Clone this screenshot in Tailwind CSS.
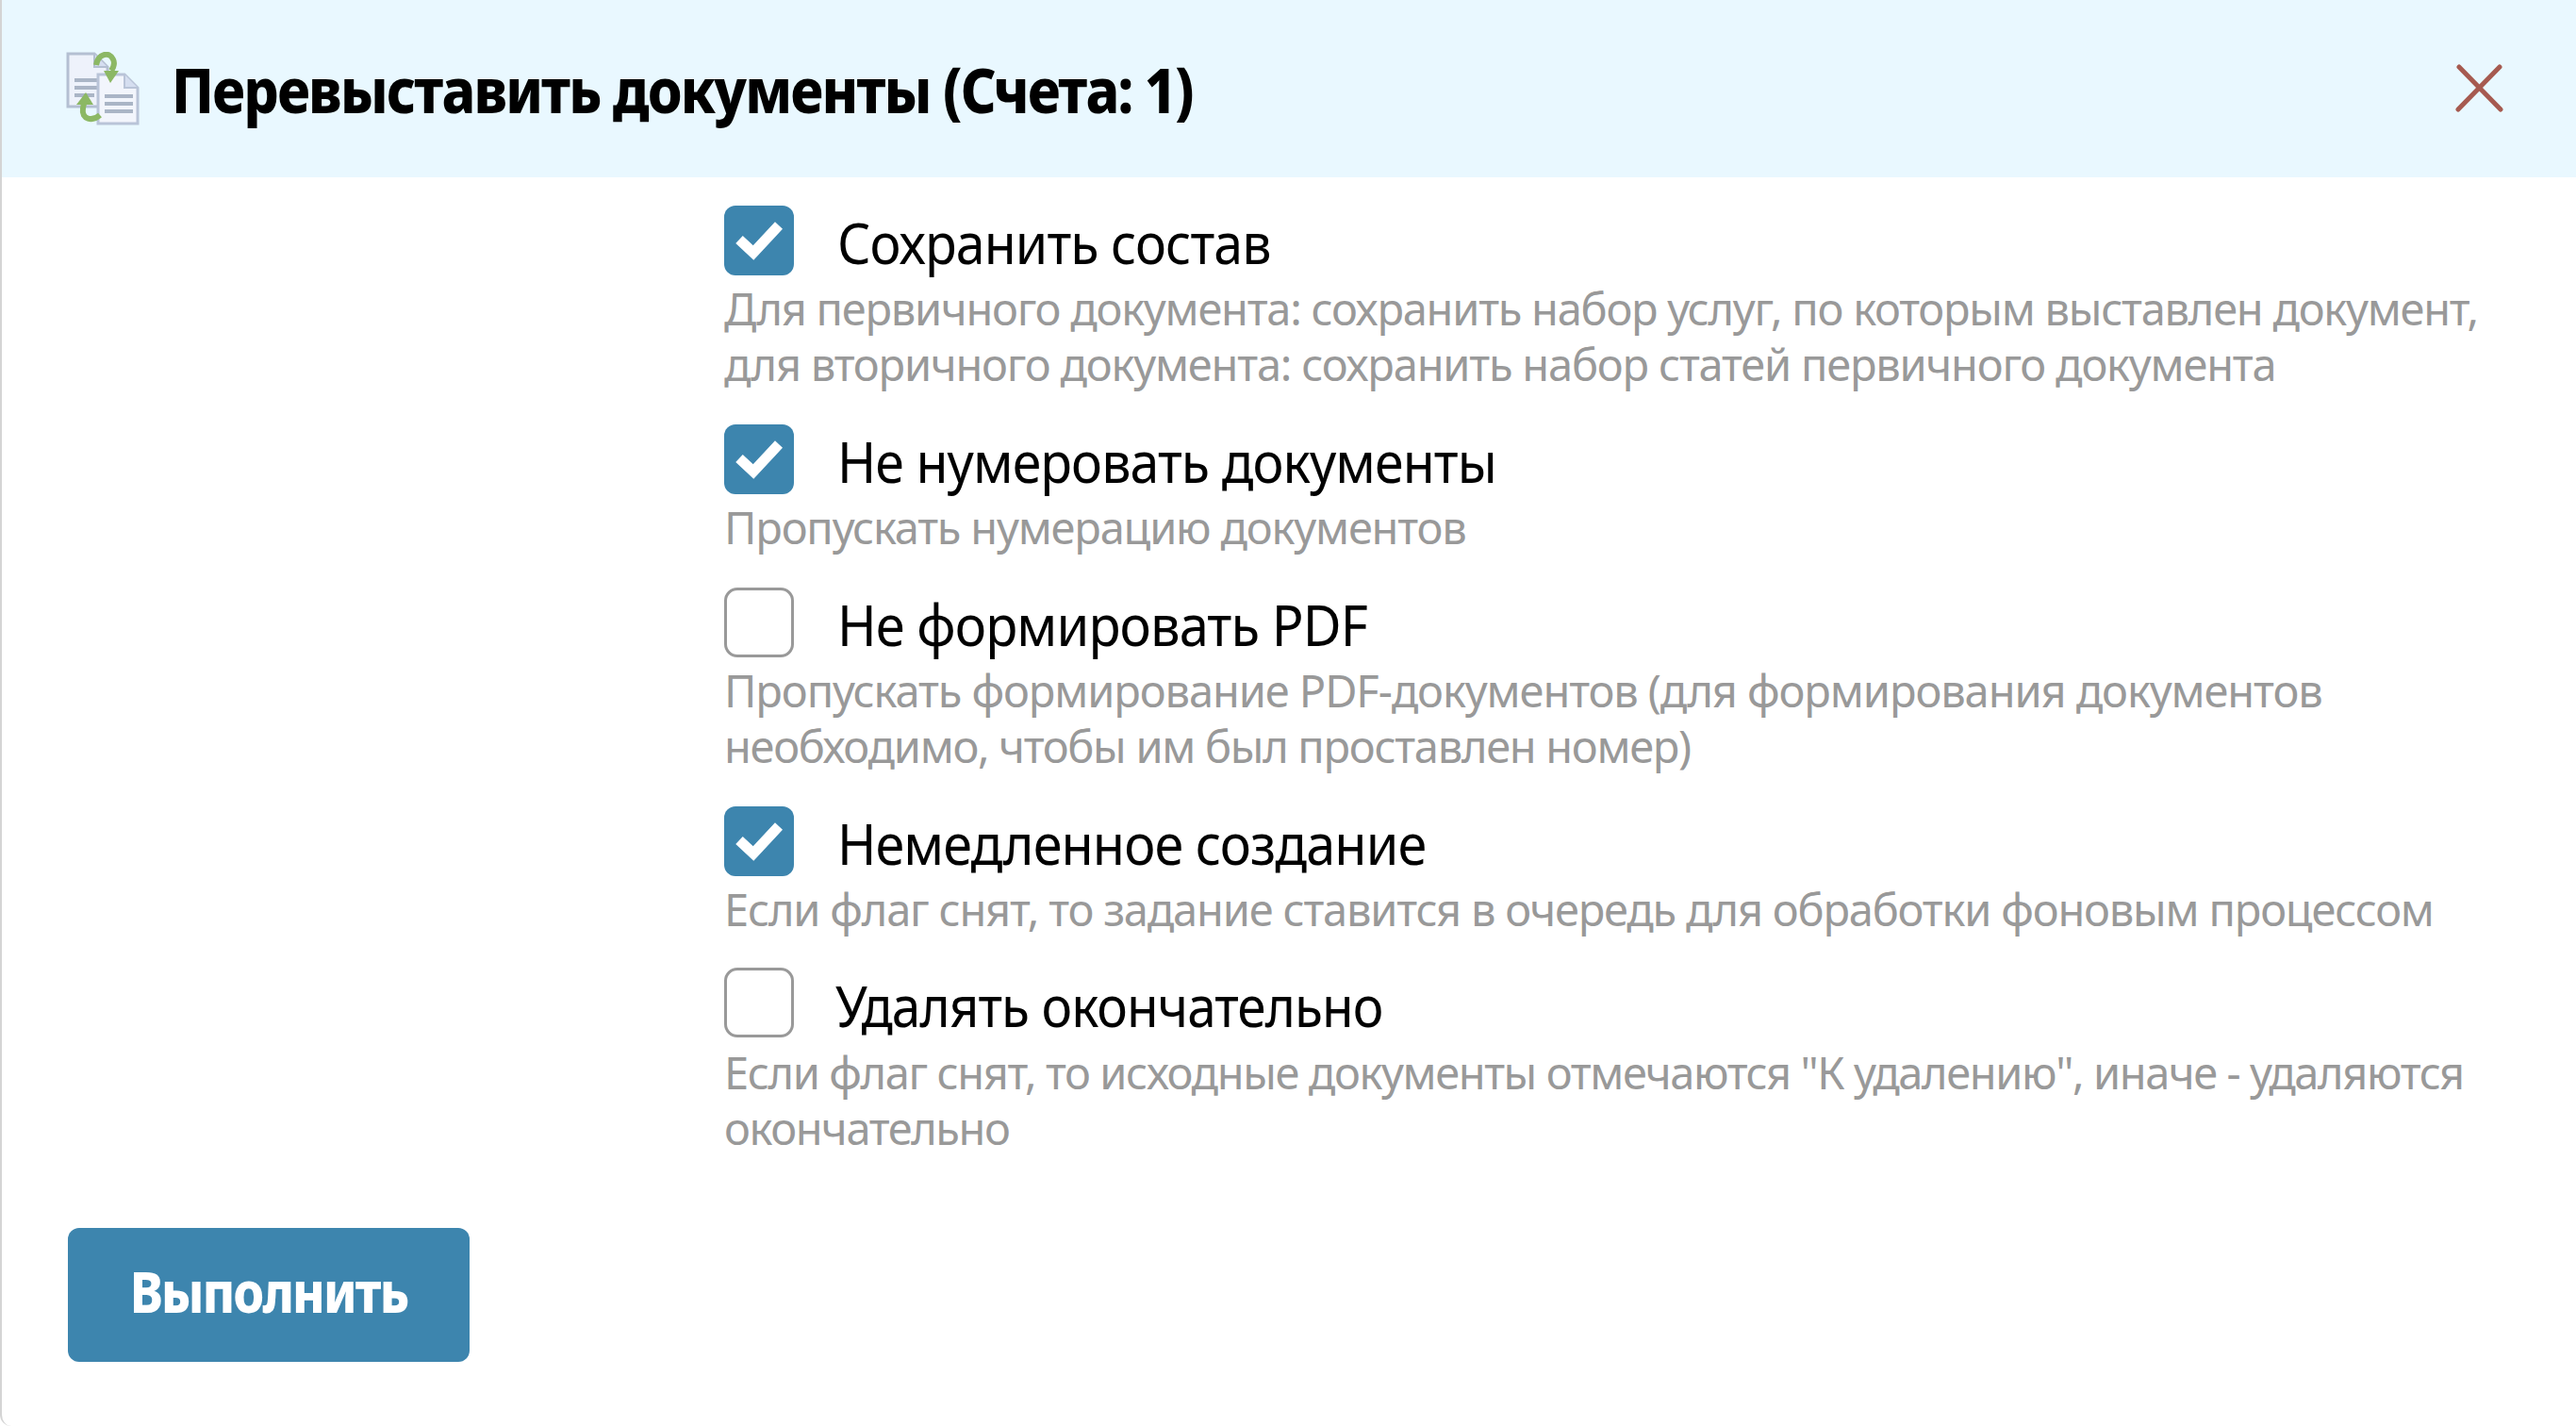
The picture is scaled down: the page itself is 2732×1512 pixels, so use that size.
<!DOCTYPE html>
<html lang="ru">
<head>
<meta charset="utf-8">
<script src="https://cdn.jsdelivr.net/npm/@tailwindcss/browser@4"></script>
<title>Перевыставить документы</title>
</head>
<body class="bg-white font-['Noto_Sans','Open_Sans',sans-serif]">
<div class="w-[2732px] h-[1512px] flex flex-col border-l-2 border-[#d4d4d4] overflow-hidden rounded-bl-xl">
  <header class="h-[188px] shrink-0 bg-[#e9f8ff] flex items-center pl-[68px] pr-[76px]">
    <svg class="w-[78px] h-[78px] shrink-0" viewBox="0 0 78 78" fill="none">
      <path d="M2 2H30L44 16V58H2Z" fill="#eef2fb" stroke="#b4bfd2" stroke-width="3"/>
      <path d="M30 2V16H44" fill="#d5def0" stroke="#b4bfd2" stroke-width="2"/>
      <path d="M9 30H36M9 38H36M9 46H30" stroke="#aab5c6" stroke-width="4"/>
      <path d="M34 24H62L76 38V76H34Z" fill="#f2f5fc" stroke="#b9c4d8" stroke-width="3"/>
      <path d="M62 24V38H76" fill="#d5def0" stroke="#b9c4d8" stroke-width="2"/>
      <path d="M41 47H71M41 55H71M41 63H71" stroke="#aab5c6" stroke-width="4"/>
      <path d="M32 14C34 2 46 -1 50 8C52 12 50 17 48 20" stroke="#8cb864" stroke-width="6"/>
      <path d="M40 20H56L47 33Z" fill="#8cb864"/>
      <path d="M36 67C28 74 16 72 18 60C18 57 19 55 20 53" stroke="#8cb864" stroke-width="6"/>
      <path d="M11 56L21 43L29 56Z" fill="#8cb864"/>
    </svg>
    <h1 class="ml-[34px] text-[66px] leading-none font-extrabold text-black tracking-[-2.1px] whitespace-nowrap origin-left scale-x-[0.894]">Перевыставить документы (Счета: 1)</h1>
    <button class="ml-auto w-[52px] h-[52px] shrink-0">
      <svg viewBox="0 0 52 52" class="w-full h-full" fill="none" stroke="#a65a50" stroke-width="5" stroke-linecap="round"><path d="M4 3L48 48M47 3L3 48"/></svg>
    </button>
  </header>
  <main class="flex-1 flex flex-col pt-[30px]">
    <div class="pl-[766px] flex flex-col h-[1084px] text-[#999999] text-[47px] leading-[59px] tracking-[-1.2px]">
      <section class="pb-[32px]">
        <label class="flex items-center gap-[46px] text-black text-[60px] h-[74px] tracking-[-1px]">
          <span class="w-[74px] h-[74px] shrink-0 rounded-[12px] bg-[#3d85ae] flex items-center justify-center">
            <svg viewBox="0 0 50 42" class="w-[50px] h-[42px]" fill="none" stroke="#fff" stroke-width="11"><path d="M4 20L19 34L46 5"/></svg>
          </span><span class="pt-[4px] whitespace-nowrap origin-left scale-x-[0.925]">Сохранить состав</span></label>
        <p class="mt-[6px] mb-[2px] whitespace-nowrap tracking-[-1.25px]">Для первичного документа: сохранить набор услуг, по которым выставлен документ,<br><span class="tracking-[-1.2px]">для вторичного документа: сохранить набор статей первичного документа</span></p>
      </section>
      <section class="pb-[32px]">
        <label class="flex items-center gap-[46px] text-black text-[60px] h-[74px] tracking-[-1px]">
          <span class="w-[74px] h-[74px] shrink-0 rounded-[12px] bg-[#3d85ae] flex items-center justify-center">
            <svg viewBox="0 0 50 42" class="w-[50px] h-[42px]" fill="none" stroke="#fff" stroke-width="11"><path d="M4 20L19 34L46 5"/></svg>
          </span><span class="pt-[4px] whitespace-nowrap origin-left scale-x-[0.925]">Не нумеровать документы</span></label>
        <p class="mt-[6px] mb-[2px] whitespace-nowrap">Пропускать нумерацию документов</p>
      </section>
      <section class="pb-[32px]">
        <label class="flex items-center gap-[46px] text-black text-[60px] h-[74px] tracking-[-1px]">
          <span class="w-[74px] h-[74px] shrink-0 rounded-[14px] bg-white border-[3px] border-[#999999]"></span><span class="pt-[4px] whitespace-nowrap origin-left scale-x-[0.935]">Не формировать PDF</span></label>
        <p class="mt-[6px] mb-[2px] whitespace-nowrap tracking-[-1.1px]">Пропускать формирование PDF-документов (для формирования документов<br><span class="tracking-[-1.3px]">необходимо, чтобы им был проставлен номер)</span></p>
      </section>
      <section class="pb-[32px]">
        <label class="flex items-center gap-[46px] text-black text-[60px] h-[74px] tracking-[-1px]">
          <span class="w-[74px] h-[74px] shrink-0 rounded-[12px] bg-[#3d85ae] flex items-center justify-center">
            <svg viewBox="0 0 50 42" class="w-[50px] h-[42px]" fill="none" stroke="#fff" stroke-width="11"><path d="M4 20L19 34L46 5"/></svg>
          </span><span class="pt-[4px] whitespace-nowrap origin-left scale-x-[0.93]">Немедленное создание</span></label>
        <p class="mt-[6px] whitespace-nowrap">Если флаг снят, то задание ставится в очередь для обработки фоновым процессом</p>
      </section>
      <section>
        <label class="flex items-center gap-[44px] text-black text-[60px] h-[74px] tracking-[-1px]">
          <span class="w-[74px] h-[74px] shrink-0 rounded-[14px] bg-white border-[3px] border-[#999999]"></span><span class="pt-[6px] whitespace-nowrap origin-left scale-x-[0.915]">Удалять окончательно</span></label>
        <p class="mt-[8px] whitespace-nowrap tracking-[-1.4px]">Если флаг снят, то исходные документы отмечаются "К удалению", иначе - удаляются<br>окончательно</p>
      </section>
    </div>
    <div class="pl-[70px]">
      <button class="w-[426px] h-[142px] rounded-[12px] bg-[#3d85ae] text-white font-extrabold text-[60px] tracking-[-2.1px]"><span class="block pb-[9px] scale-x-[0.88]">Выполнить</span></button>
    </div>
  </main>
</div>
</body>
</html>
